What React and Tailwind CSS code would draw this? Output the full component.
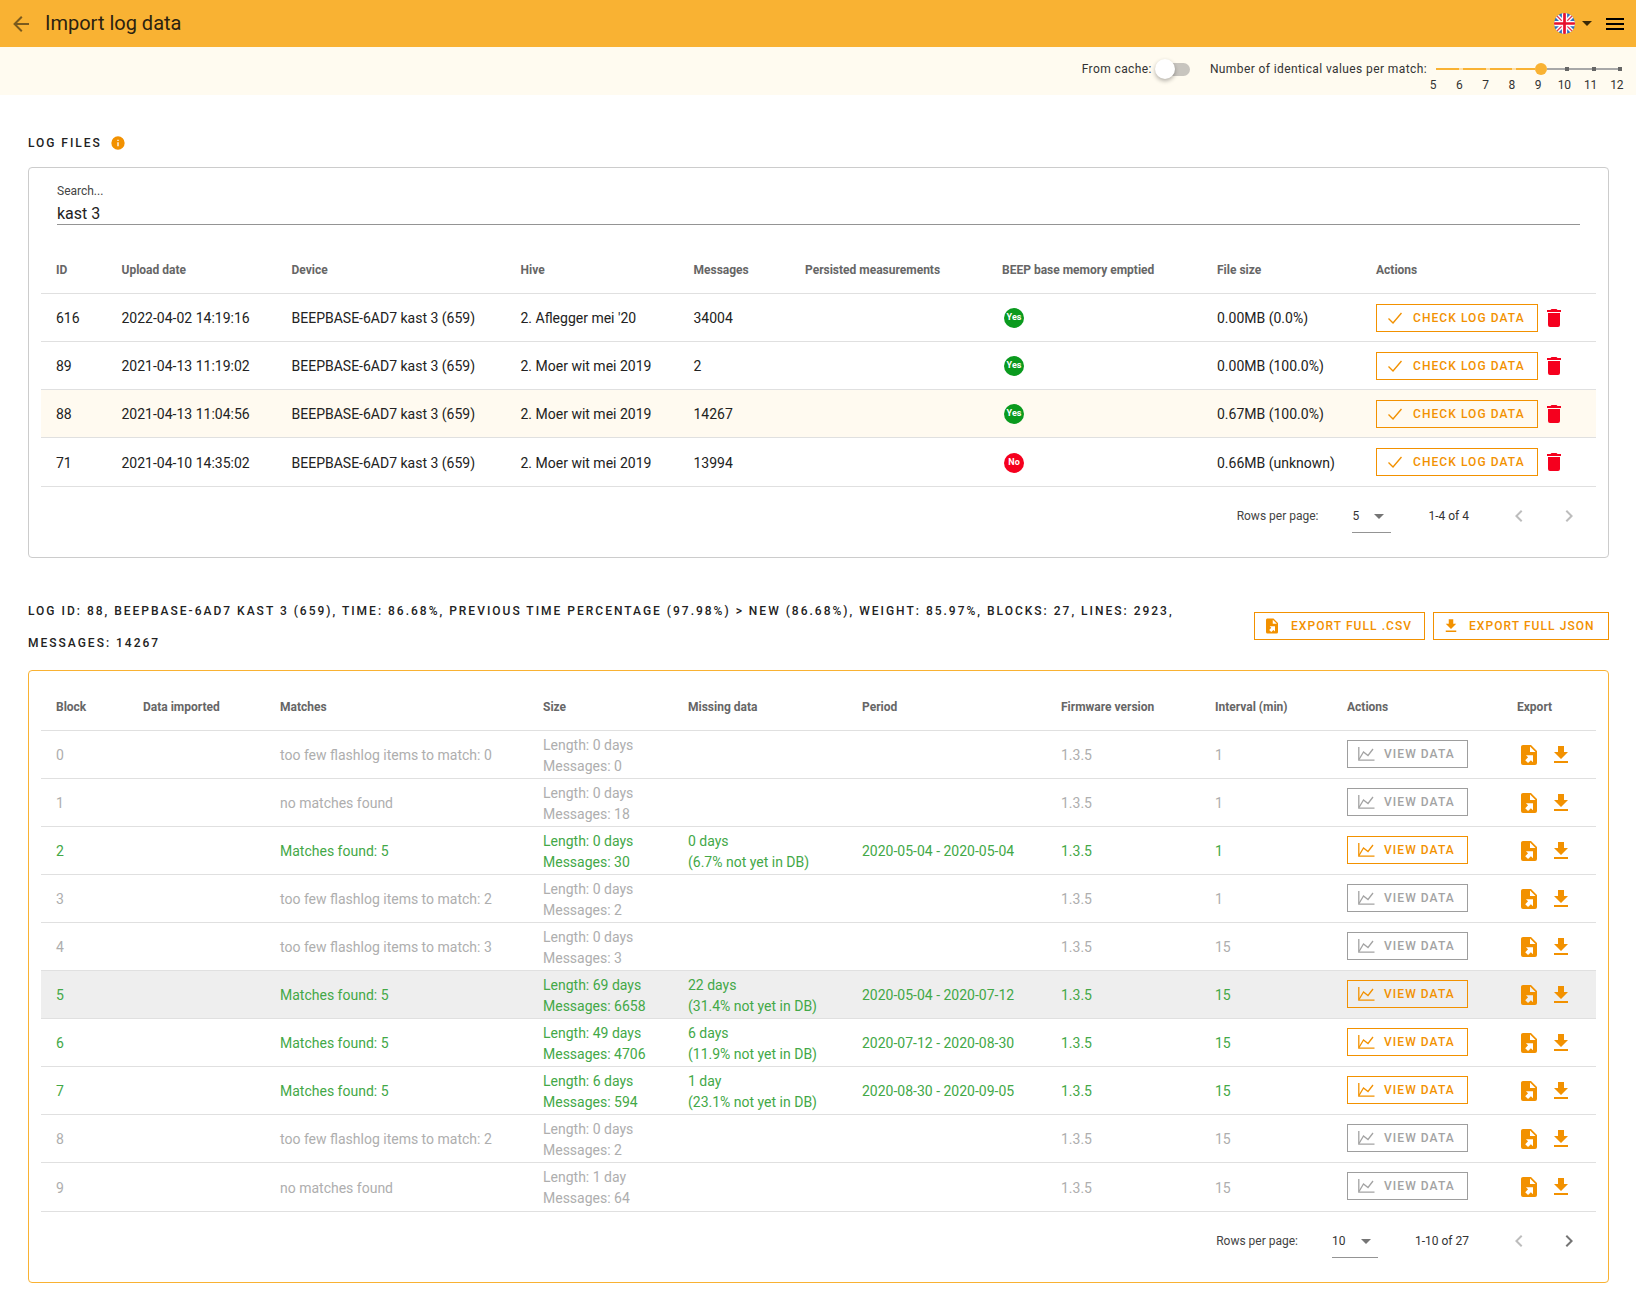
import React from "react";

const P = {
  arrow: "M20,11V13H8L13.5,18.5L12.08,19.92L4.16,12L12.08,4.08L13.5,5.5L8,11H20Z",
  menu: "M3,6H21V8H3V6M3,11H21V13H3V11M3,16H21V18H3V16Z",
  info: "M13,9H11V7H13M13,17H11V11H13M12,2A10,10 0 0,0 2,12A10,10 0 0,0 12,22A10,10 0 0,0 22,12A10,10 0 0,0 12,2Z",
  del: "M19,4H15.5L14.5,3H9.5L8.5,4H5V6H19M6,19A2,2 0 0,0 8,21H16A2,2 0 0,0 18,19V7H6V19Z",
  down: "M5,20H19V18H5M19,9H15V3H9V9H5L12,16L19,9Z",
  file: "M6,2C4.89,2 4,2.9 4,4V20A2,2 0 0,0 6,22H18A2,2 0 0,0 20,20V8L14,2M13,3.5L18.5,9H13M8.93,12.22H16V19.29L13.88,17.17L11.05,20L8.22,17.17L11.05,14.35",
  caret: "M7,10L12,15L17,10H7Z",
  left: "M15.41,16.58L10.83,12L15.41,7.41L14,6L8,12L14,18L15.41,16.58Z",
  right: "M8.59,16.58L13.17,12L8.59,7.41L10,6L16,12L10,18L8.59,16.58Z",
};

function Icon({ d, className }) {
  return (
    <svg viewBox="0 0 24 24" className={`shrink-0 ${className}`} fill="currentColor">
      <path d={d} />
    </svg>
  );
}

function Flag() {
  return (
    <svg viewBox="0 0 20 20" className="w-[21px] h-[21px]">
      <defs>
        <clipPath id="flagclip">
          <circle cx="10" cy="10" r="10" />
        </clipPath>
      </defs>
      <g clipPath="url(#flagclip)">
        <rect width="20" height="20" fill="#2a6fc4" />
        <path d="M0 0L20 20M20 0L0 20" stroke="#fff" strokeWidth="4" />
        <path d="M0 0L20 20M20 0L0 20" stroke="#e5364f" strokeWidth="1.2" />
        <path d="M10 0V20M0 10H20" stroke="#fff" strokeWidth="5" />
        <path d="M10 0V20M0 10H20" stroke="#e8112d" strokeWidth="2.6" />
      </g>
    </svg>
  );
}

function Check() {
  return (
    <svg viewBox="0 0 14 12" className="w-[14px] h-3" fill="none" stroke="currentColor" strokeWidth="1.4">
      <path d="M0.5 6.5L5 11L13.5 1" />
    </svg>
  );
}

function Chart() {
  return (
    <svg viewBox="0 0 17 14" className="w-[17px] h-[14px]" fill="none" stroke="currentColor" strokeWidth="1.3">
      <path d="M0.8 0V13.2H16.5" />
      <path d="M1 12.5L5.5 5L10 8.5L15 2" />
    </svg>
  );
}

function Toolbar() {
  const labels = [5, 6, 7, 8, 9, 10, 11, 12];
  return (
    <div className="h-[48px] bg-[#fffbf0] flex justify-end text-[12px] text-[#333] tracking-[0.4px]">
      <div className="flex items-center h-[44px] leading-none">
        <span>From cache:</span>
        <div className="flex items-center ml-[3px]">
          <div className="relative z-10 w-5 h-5 rounded-full bg-white shadow-[0_2px_4px_rgba(0,0,0,0.3)]" />
          <div className="w-[30px] h-[13px] -ml-[15px] rounded-full bg-[#c8c5bf]" />
        </div>
        <span className="ml-[20px]">Number of identical values per match:</span>
      </div>
      <div className="w-[200px] ml-[9px] pr-[6px]">
        <div className="flex items-center h-[44px]">
          <div className="w-[23px] h-[2px] bg-[#f9b233]" />
          <div className="w-[4px] h-[2px] bg-[#fddfa9]" />
          <div className="w-[23px] h-[2px] bg-[#f9b233]" />
          <div className="w-[4px] h-[2px] bg-[#fddfa9]" />
          <div className="w-[22px] h-[2px] bg-[#f9b233]" />
          <div className="w-[4px] h-[2px] bg-[#fddfa9]" />
          <div className="w-[19px] h-[2px] bg-[#f9b233]" />
          <div className="w-3 h-3 rounded-full bg-[#f9b233] shrink-0" />
          <div className="w-[75px] h-[2px] bg-[#a8a8a8] flex items-center pl-[18px] gap-[22.5px]">
            <div className="w-1 h-1 bg-[#666]" />
            <div className="w-1 h-1 bg-[#666]" />
            <div className="w-1 h-1 bg-[#666]" />
          </div>
        </div>
        <div className="grid grid-cols-8 w-[210px] -ml-[16px] -mt-[14px] leading-4 text-center tracking-normal">
          {labels.map((l) => (
            <span key={l}>{l}</span>
          ))}
        </div>
      </div>
    </div>
  );
}

function Th({ children }) {
  return (
    <th className="h-[48px] px-4 first:pl-[15px] pt-px border-b border-[#e0e0e0] text-left text-[12px] font-bold text-[#666] whitespace-nowrap">
      {children}
    </th>
  );
}

function Td({ children, last, flat, className = "" }) {
  return (
    <td
      className={`px-4 first:pl-[15px] border-b border-[#e0e0e0] text-[14px] whitespace-nowrap ${flat ? "" : "pt-[2px]"} ${
        last ? "h-[49px]" : "h-[48px]"
      } ${className}`}
    >
      {children}
    </td>
  );
}

function Footer({ perPage, range, selectWidth, nextDark }) {
  return (
    <div className="h-[70px] pt-[17px] pr-[15px] flex justify-end text-[12px] text-[#333]">
      <div className="h-6 flex items-center text-[#444]">Rows per page:</div>
      <div className={`${selectWidth} h-[29px] ml-[34px] border-b border-[#949494] flex justify-between items-start`}>
        <span className="h-6 flex items-center">{perPage}</span>
        <Icon d={P.caret} className="w-6 h-6 text-[#757575]" />
      </div>
      <div className="h-6 flex items-center ml-[37px] whitespace-nowrap">{range}</div>
      <Icon d={P.left} className="w-6 h-6 ml-[38px] text-[#bdbdbd]" />
      <Icon d={P.right} className={`w-6 h-6 ml-[26px] ${nextDark ? "text-[#757575]" : "text-[#bdbdbd]"}`} />
    </div>
  );
}

const logs = [
  ["616", "2022-04-02 14:19:16", "2. Aflegger mei '20", "34004", "Yes", "0.00MB (0.0%)"],
  ["89", "2021-04-13 11:19:02", "2. Moer wit mei 2019", "2", "Yes", "0.00MB (100.0%)"],
  ["88", "2021-04-13 11:04:56", "2. Moer wit mei 2019", "14267", "Yes", "0.67MB (100.0%)"],
  ["71", "2021-04-10 14:35:02", "2. Moer wit mei 2019", "13994", "No", "0.66MB (unknown)"],
];

const few = (n) => `too few flashlog items to match: ${n}`;
const blocks = [
  [0, few(0), "0 days", "0", "", "", "", 1],
  [1, "no matches found", "0 days", "18", "", "", "", 1],
  [2, "Matches found: 5", "0 days", "30", "0 days", "(6.7% not yet in DB)", "2020-05-04 - 2020-05-04", 1],
  [3, few(2), "0 days", "2", "", "", "", 1],
  [4, few(3), "0 days", "3", "", "", "", 15],
  [5, "Matches found: 5", "69 days", "6658", "22 days", "(31.4% not yet in DB)", "2020-05-04 - 2020-07-12", 15],
  [6, "Matches found: 5", "49 days", "4706", "6 days", "(11.9% not yet in DB)", "2020-07-12 - 2020-08-30", 15],
  [7, "Matches found: 5", "6 days", "594", "1 day", "(23.1% not yet in DB)", "2020-08-30 - 2020-09-05", 15],
  [8, few(2), "0 days", "2", "", "", "", 15],
  [9, "no matches found", "1 day", "64", "", "", "", 15],
];

export default function App() {
  return (
    <div className="font-[Roboto,sans-serif] bg-white text-[#222] w-[1636px] min-h-[1306px]">
      <header className="h-[47px] bg-[#f9b233] flex items-center pl-[9px] pr-[9px]">
        <Icon d={P.arrow} className="w-6 h-6 text-[#7a5a1e]" />
        <h1 className="ml-[12px] -mt-[2px] text-[20px] leading-none text-[#2b2210]">Import log data</h1>
        <div className="ml-auto flex items-center">
          <Flag />
          <Icon d={P.caret} className="w-6 h-6 text-[#3a2a08] -mt-px" />
          <Icon d={P.menu} className="w-6 h-6 ml-[4px] text-black" />
        </div>
      </header>
      <Toolbar />

      <main className="pl-[28px] pr-[27px] pt-[36px]">
        <div className="h-6 flex items-center mb-3">
          <span className="text-[12px] font-medium tracking-[1.95px] text-[#222]">LOG FILES</span>
          <Icon d={P.info} className="w-4 h-4 ml-[8px] text-[#f29100]" />
        </div>

        <section className="border border-[#cccccc] rounded-[4px] px-[12px] pt-[15px]">
          <div className="mx-4 mb-[21px]">
            <div className="text-[12px] leading-4 text-[#444]">Search...</div>
            <div className="mt-[2px] h-[24px] border-b border-[#949494] text-[16px] leading-[26px] text-[#222]">kast 3</div>
          </div>
          <table className="table-fixed w-[1555px] border-separate border-spacing-0">
            <colgroup>
              <col className="w-[64.5px]" />
              <col className="w-[170px]" />
              <col className="w-[229px]" />
              <col className="w-[173px]" />
              <col className="w-[111.5px]" />
              <col className="w-[197px]" />
              <col className="w-[215px]" />
              <col className="w-[159px]" />
              <col className="w-[236px]" />
            </colgroup>
            <thead>
              <tr>
                <Th>ID</Th>
                <Th>Upload date</Th>
                <Th>Device</Th>
                <Th>Hive</Th>
                <Th>Messages</Th>
                <Th>Persisted measurements</Th>
                <Th>BEEP base memory emptied</Th>
                <Th>File size</Th>
                <Th>Actions</Th>
              </tr>
            </thead>
            <tbody>
              {logs.map((r, i) => {
                const last = i === logs.length - 1;
                return (
                  <tr key={r[0]} className={r[0] === "88" ? "bg-[#fffaf0]" : ""}>
                    <Td last={last}>{r[0]}</Td>
                    <Td last={last}>{r[1]}</Td>
                    <Td last={last}>BEEPBASE-6AD7 kast 3 (659)</Td>
                    <Td last={last}>{r[2]}</Td>
                    <Td last={last}>{r[3]}</Td>
                    <Td last={last} />
                    <Td last={last} flat className="pt-px">
                      <div
                        className={`ml-[2px] w-5 h-5 rounded-full flex items-center justify-center text-[9px] font-bold text-white ${
                          r[4] === "Yes" ? "bg-[#0a9a1e]" : "bg-[#f5001e]"
                        }`}
                      >
                        {r[4]}
                      </div>
                    </Td>
                    <Td last={last}>{r[5]}</Td>
                    <Td last={last} flat>
                      <div className="flex items-center">
                        <div className="w-[162px] h-[28px] border border-[#f29100] text-[#f29100] flex items-center pl-[11px]">
                          <Check />
                          <span className="ml-[11px] text-[12px] font-medium tracking-[1.07px] whitespace-nowrap">CHECK LOG DATA</span>
                        </div>
                        <Icon d={P.del} className="w-6 h-6 ml-[4px] text-[#f5001e]" />
                      </div>
                    </Td>
                  </tr>
                );
              })}
            </tbody>
          </table>
          <Footer perPage="5" range="1-4 of 4" selectWidth="w-[39px]" />
        </section>

        <div className="mt-[37px] mb-[11px] flex items-center justify-between">
          <div className="w-[1180px] text-[12px] font-medium leading-[32px] tracking-[2px] text-[#222]">
            LOG ID: 88, BEEPBASE-6AD7 KAST 3 (659), TIME: 86.68%, PREVIOUS TIME PERCENTAGE (97.98%) &gt; NEW (86.68%), WEIGHT: 85.97%, BLOCKS: 27, LINES: 2923, MESSAGES: 14267
          </div>
          <div className="-mt-[2px] flex gap-2 text-[#f29100] text-[12px] font-medium tracking-[1.07px]">
            <div className="w-[171px] h-[28px] border border-[#f29100] flex items-center pl-[8px]">
              <Icon d={P.file} className="w-[18px] h-[18px]" />
              <span className="ml-[10px] whitespace-nowrap">EXPORT FULL .CSV</span>
            </div>
            <div className="w-[176px] h-[28px] border border-[#f29100] flex items-center pl-[8px]">
              <Icon d={P.down} className="w-[18px] h-[18px]" />
              <span className="ml-[9px] whitespace-nowrap">EXPORT FULL JSON</span>
            </div>
          </div>
        </div>

        <section className="border border-[#f9b233] rounded-[4px] px-[12px] pt-[12px]">
          <table className="table-fixed w-[1555px] border-separate border-spacing-0">
            <colgroup>
              <col className="w-[86px]" />
              <col className="w-[137px]" />
              <col className="w-[263px]" />
              <col className="w-[145px]" />
              <col className="w-[174px]" />
              <col className="w-[199px]" />
              <col className="w-[154px]" />
              <col className="w-[132px]" />
              <col className="w-[170px]" />
              <col className="w-[95px]" />
            </colgroup>
            <thead>
              <tr>
                <Th>Block</Th>
                <Th>Data imported</Th>
                <Th>Matches</Th>
                <Th>Size</Th>
                <Th>Missing data</Th>
                <Th>Period</Th>
                <Th>Firmware version</Th>
                <Th>Interval (min)</Th>
                <Th>Actions</Th>
                <Th>Export</Th>
              </tr>
            </thead>
            <tbody>
              {blocks.map((b, i) => {
                const ok = b[1].startsWith("Matches");
                const last = i === blocks.length - 1;
                const tone = ok ? "text-[#43a847]" : "text-[#aeaeae]";
                const rowBg = b[0] === 5 ? "bg-[#eeeeee]" : "";
                return (
                  <tr key={b[0]} className={`${tone} ${rowBg}`}>
                    <Td last={last}>{b[0]}</Td>
                    <Td last={last} />
                    <Td last={last}>{b[1]}</Td>
                    <Td last={last} className="leading-[21px]">
                      <div>Length: {b[2]}</div>
                      <div>Messages: {b[3]}</div>
                    </Td>
                    <Td last={last} className="leading-[21px]">
                      <div>{b[4]}</div>
                      <div>{b[5]}</div>
                    </Td>
                    <Td last={last}>{b[6]}</Td>
                    <Td last={last}>1.3.5</Td>
                    <Td last={last}>{b[7]}</Td>
                    <Td last={last} flat>
                      <div
                        className={`-mt-[2px] w-[121px] h-[28px] border flex items-center pl-[10px] ${
                          ok ? "border-[#f29100] text-[#f29100]" : "border-[#9e9e9e] text-[#a3a3a3]"
                        }`}
                      >
                        <Chart />
                        <span className="ml-[9px] text-[12px] font-medium tracking-[1.07px]">VIEW DATA</span>
                      </div>
                    </Td>
                    <Td last={last} flat>
                      <div className="flex items-center gap-2 text-[#f29100]">
                        <Icon d={P.file} className="w-6 h-6" />
                        <Icon d={P.down} className="w-6 h-6" />
                      </div>
                    </Td>
                  </tr>
                );
              })}
            </tbody>
          </table>
          <Footer perPage="10" range="1-10 of 27" selectWidth="w-[46px]" nextDark />
        </section>
      </main>
    </div>
  );
}
